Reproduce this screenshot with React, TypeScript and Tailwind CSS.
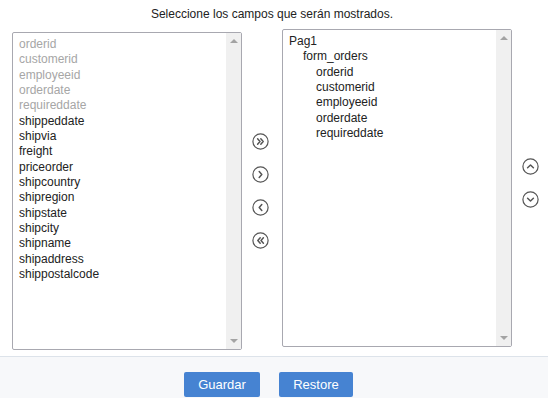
import React from 'react';

const available = [
  { name: 'orderid', used: true },
  { name: 'customerid', used: true },
  { name: 'employeeid', used: true },
  { name: 'orderdate', used: true },
  { name: 'requireddate', used: true },
  { name: 'shippeddate' },
  { name: 'shipvia' },
  { name: 'freight' },
  { name: 'priceorder' },
  { name: 'shipcountry' },
  { name: 'shipregion' },
  { name: 'shipstate' },
  { name: 'shipcity' },
  { name: 'shipname' },
  { name: 'shipaddress' },
  { name: 'shippostalcode' },
];

const selected = [
  { name: 'Pag1', level: 0 },
  { name: 'form_orders', level: 1 },
  { name: 'orderid', level: 2 },
  { name: 'customerid', level: 2 },
  { name: 'employeeid', level: 2 },
  { name: 'orderdate', level: 2 },
  { name: 'requireddate', level: 2 },
];

function CircleIcon({ d }: { d: string }) {
  return (
    <svg width="17" height="17" viewBox="0 0 17 17" fill="none" stroke="#555" strokeWidth="1.2">
      <circle cx="8.5" cy="8.5" r="7.6" />
      <path d={d} strokeWidth="1.5" strokeLinecap="round" strokeLinejoin="round" />
    </svg>
  );
}

function Scrollbar() {
  return (
    <div className="w-[15px] bg-[#f0f0f0] flex flex-col justify-between items-center py-[6px] shrink-0">
      <div className="w-0 h-0 border-l-[4px] border-r-[4px] border-b-[4px] border-l-transparent border-r-transparent border-b-[#a3a3a3]" />
      <div className="w-0 h-0 border-l-[4px] border-r-[4px] border-t-[4px] border-l-transparent border-r-transparent border-t-[#a3a3a3]" />
    </div>
  );
}

export default function App() {
  const indent = ['pl-[6px]', 'pl-[20px]', 'pl-[33px]'];
  return (
    <div className="w-[548px] h-[398px] bg-white flex flex-col font-['Liberation_Sans',Arial,sans-serif] text-[12px] text-[#222] overflow-hidden">
      <div className="text-center pt-[5px] pr-[4px] h-[29px] text-[12px] text-[#222]">
        Seleccione los campos que serán mostrados.
      </div>

      <div className="flex items-start pl-[12px] h-[327px]">
        <div className="mt-[3px] w-[230px] h-[318px] border border-[#a8a8b0] rounded-[2px] flex">
          <div className="flex-1 pt-[4px] pl-[6px] leading-[15.35px]">
            {available.map(f => (
              <div key={f.name} className={f.used ? 'text-[#a6a6a6]' : 'text-[#222]'}>{f.name}</div>
            ))}
          </div>
          <Scrollbar />
        </div>

        <div className="w-[36px] mr-[4px] flex flex-col items-center gap-[16px] pt-[104px]">
          <CircleIcon d="M5.6 5.8 L8 8.5 L5.6 11.2 M8.8 5.8 L11.2 8.5 L8.8 11.2" />
          <CircleIcon d="M7.2 5.6 L9.8 8.5 L7.2 11.4" />
          <CircleIcon d="M9.8 5.6 L7.2 8.5 L9.8 11.4" />
          <CircleIcon d="M11.4 5.8 L9 8.5 L11.4 11.2 M8.2 5.8 L5.8 8.5 L8.2 11.2" />
        </div>

        <div className="w-[230px] h-[318px] border border-[#a8a8b0] rounded-[2px] flex">
          <div className="flex-1 pt-[4px] leading-[15.35px]">
            {selected.map(f => (
              <div key={f.name} className={indent[f.level]}>{f.name}</div>
            ))}
          </div>
          <Scrollbar />
        </div>

        <div className="w-[36px] flex flex-col items-center gap-[16px] pt-[129px]">
          <CircleIcon d="M5.6 9.8 L8.5 7 L11.4 9.8" />
          <CircleIcon d="M5.6 7.2 L8.5 10 L11.4 7.2" />
        </div>
      </div>

      <div className="flex-1 border-t border-[#dde3ea] bg-[#f7f8fa] flex justify-center items-start gap-[19px] pt-[15px] pr-[11px]">
        <button className="w-[76px] h-[25px] bg-[#4683d2] text-white text-[13px] rounded-[2px]">Guardar</button>
        <button className="w-[74px] h-[25px] bg-[#4683d2] text-white text-[13px] rounded-[2px]">Restore</button>
      </div>
    </div>
  );
}
